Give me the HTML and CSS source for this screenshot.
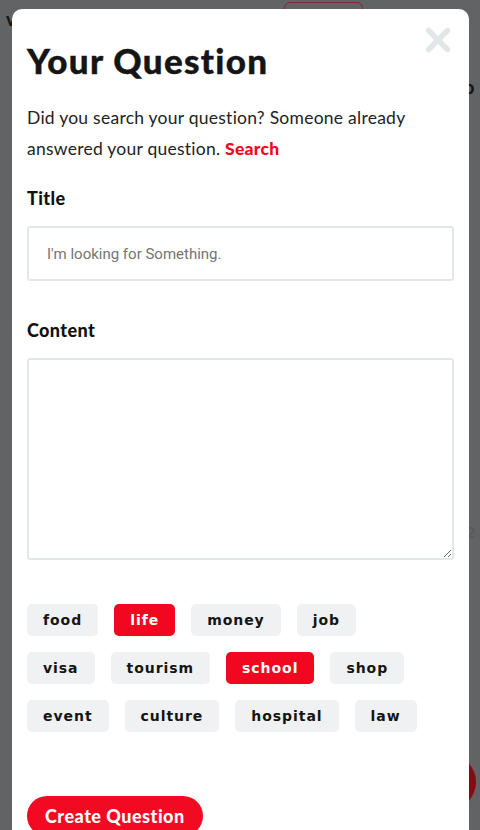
FILE: index.html
```html
<!DOCTYPE html>
<html lang="en">
<head>
<meta charset="utf-8">
<title>Your Question</title>
<link rel="stylesheet" href="styles.css">
</head>
<body>
<div class="page">
  <div class="bg-btn"></div>
  <span class="bg-glyph bg-glyph-tl">v</span>
  <span class="bg-glyph bg-glyph-r">o</span>
  <span class="bg-num">2</span>
  <div class="bg-fab"></div>
</div>
<div class="backdrop">
  <div class="modal">
    <button class="close" aria-label="Close">
      <svg width="26" height="26" viewBox="0 0 26 26"><path d="M3.5 3.5 L22.5 22.5 M22.5 3.5 L3.5 22.5" stroke="#e1e6e9" stroke-width="5.5" stroke-linecap="round" fill="none"/></svg>
    </button>
    <h1 class="title">Your Question</h1>
    <p class="lead">Did you search your question? Someone already answered your question. <a class="search" href="#">Search</a></p>
    <label class="label label-title">Title</label>
    <input class="field" type="text" placeholder="I'm looking for Something.">
    <label class="label label-content">Content</label>
    <textarea class="area"></textarea>
    <div class="tags">
      <div class="tag-row">
        <span class="tag">food</span>
        <span class="tag active">life</span>
        <span class="tag">money</span>
        <span class="tag">job</span>
      </div>
      <div class="tag-row">
        <span class="tag">visa</span>
        <span class="tag">tourism</span>
        <span class="tag active">school</span>
        <span class="tag">shop</span>
      </div>
      <div class="tag-row">
        <span class="tag">event</span>
        <span class="tag">culture</span>
        <span class="tag">hospital</span>
        <span class="tag">law</span>
      </div>
    </div>
    <button class="submit">Create Question</button>
  </div>
</div>
</body>
</html>
```
FILE: styles.css
```css
* { box-sizing: border-box; }
html, body { margin: 0; padding: 0; }
body {
  width: 480px;
  height: 830px;
  overflow: hidden;
  background: #626365;
  font-family: Lato, "Liberation Sans", sans-serif;
}
.page { position: relative; width: 480px; height: 830px; }
.bg-btn {
  position: absolute; left: 284px; top: 2px; width: 79px; height: 30px;
  border: 1.5px solid #7b2a32; border-radius: 6px;
}
.bg-glyph { position: absolute; color: #151515; font: 900 18px Lato, sans-serif; }
.bg-glyph-tl { left: 6px; top: 8px; }
.bg-glyph-r { left: 464px; top: 76px; }
.bg-num { position: absolute; left: 466px; top: 522px; color: #58595b; font: 700 16px Lato, sans-serif; }
.bg-fab {
  position: absolute; left: 420px; top: 754px; width: 56px; height: 56px;
  border-radius: 50%; background: #8c0914;
}

.backdrop {
  position: fixed; inset: 0;
  padding: 9px 11px 0 12px;
}
.modal {
  position: relative;
  width: 457px;
  height: 900px;
  background: #fff;
  border-radius: 10px;
  padding: 30px 15px 0 15px;
  display: flex;
  flex-direction: column;
  align-items: flex-start;
}
.close {
  position: absolute; top: 18px; right: 18px;
  width: 26px; height: 26px; padding: 0; border: 0; background: none;
  display: flex;
}
.title {
  margin: 0;
  font-family: Lato, sans-serif;
  font-weight: 900;
  font-size: 35px;
  line-height: 42px;
  letter-spacing: 1.3px;
  color: #151515;
  -webkit-text-stroke: 0.4px #151515;
}
.lead {
  margin: 21px 0 0 0;
  font-size: 17.5px;
  line-height: 31px;
  color: #222;
  letter-spacing: 0.25px;
}
.search {
  color: #f2071e;
  font-weight: 900;
  text-decoration: none;
}
.label {
  display: block;
  font-weight: 900;
  font-size: 18px;
  line-height: 22px;
  color: #111;
  letter-spacing: 0.4px;
}
.label-title { margin-top: 23px; }
.label-content { margin-top: 38px; }
.field {
  margin-top: 17px;
  width: 427px;
  height: 55px;
  border: 2px solid #e3e7ea;
  border-radius: 3px;
  padding: 0 18px;
  font-family: Roboto, sans-serif;
  font-size: 15px;
  color: #333;
  outline: none;
}
.field::placeholder { color: #747474; }
.area {
  margin-top: 17px;
  width: 427px;
  height: 202px;
  border: 2px solid #e3e7ea;
  border-radius: 3px;
  resize: vertical;
  outline: none;
  display: block;
}
.tags {
  margin-top: 44px;
  display: flex;
  flex-direction: column;
  gap: 16px;
  width: 427px;
}
.tag-row {
  display: flex;
  gap: 16px;
}
.tag {
  height: 32px;
  padding: 0 16px;
  display: flex;
  align-items: center;
  background: #f0f1f3;
  border-radius: 5px;
  font-family: "DejaVu Sans", sans-serif;
  font-weight: 700;
  font-size: 14px;
  letter-spacing: 0.95px;
  color: #141414;
}
.tag.active { background: #f1071f; color: #fff; }
.submit {
  margin-top: 64px;
  height: 40px;
  padding: 0 18px;
  border: 0;
  border-radius: 20px;
  background: #f20a22;
  color: #fff;
  font-family: Lato, sans-serif;
  font-weight: 900;
  font-size: 18px;
  letter-spacing: 0.5px;
}
```
